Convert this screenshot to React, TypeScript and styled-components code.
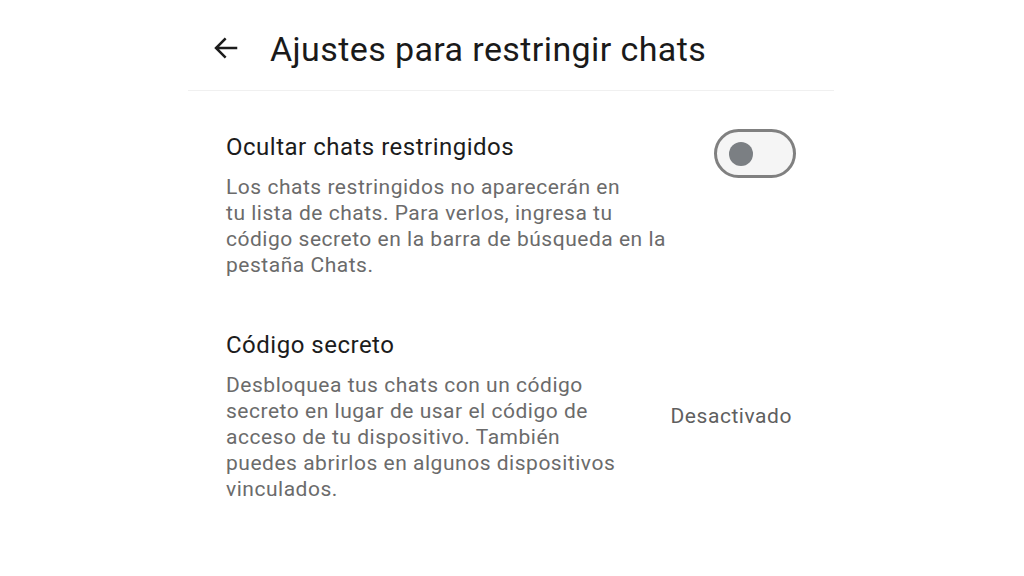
import styled, { createGlobalStyle } from "styled-components";

const GlobalStyle = createGlobalStyle`
  body {
    margin: 0;
    background: #ffffff;
    font-family: Roboto, "Noto Sans", sans-serif;
    -webkit-font-smoothing: antialiased;
  }
`;

const Screen = styled.div`
  width: 1024px;
  height: 576px;
  display: flex;
  justify-content: center;
  background: #ffffff;
  overflow: hidden;
`;

const Panel = styled.div`
  width: 646px;
  margin-left: -2px;
  display: flex;
  flex-direction: column;
`;

const Header = styled.header`
  height: 91px;
  display: flex;
  align-items: center;
  gap: 29px;
  padding: 8px 0 0 23px;
  box-sizing: border-box;
  border-bottom: 1.5px solid #f0f0f0;
`;

const BackButton = styled.button`
  border: 0;
  background: none;
  padding: 0;
  width: 30px;
  height: 30px;
  display: flex;
  align-items: center;
  justify-content: center;
  color: #1c1c1c;
  cursor: pointer;
  margin-top: -3px;
`;

const Title = styled.h1`
  margin: 0;
  font-size: 34px;
  font-weight: 400;
  color: #1a1a1a;
  letter-spacing: 0.4px;
`;

const Section = styled.section<{ $top: number }>`
  display: flex;
  align-items: center;
  justify-content: space-between;
  padding: ${(p) => p.$top}px 38px 0 38px;
`;

const TextBlock = styled.div`
  display: flex;
  flex-direction: column;
  gap: 12px;
`;

const ItemTitle = styled.div`
  font-size: 24px;
  line-height: 30px;
  letter-spacing: 0.5px;
  color: #1c1c1c;
`;

const ItemText = styled.p`
  margin: 0;
  font-size: 21px;
  line-height: 26px;
  letter-spacing: 0.52px;
  color: #6b6b6b;
`;

const SideValue = styled.span`
  font-size: 21px;
  letter-spacing: 0.55px;
  color: #5f5f5f;
  margin-right: 4px;
`;

const Switch = styled.button<{ $on: boolean }>`
  width: 82px;
  height: 49px;
  box-sizing: border-box;
  border: 3px solid #808080;
  border-radius: 25px;
  background: #f5f5f5;
  padding: 0 0 0 12px;
  display: flex;
  align-items: center;
  justify-content: ${(p) => (p.$on ? "flex-end" : "flex-start")};
  align-self: flex-start;
  margin-top: -3px;
  cursor: pointer;

  &::after {
    content: "";
    width: 24px;
    height: 24px;
    border-radius: 50%;
    background: #7b7f83;
  }
`;

function BackArrow() {
  return (
    <svg width="30" height="30" viewBox="0 0 24 24" fill="none">
      <path
        d="M20 12H4.5M11 5l-7 7 7 7"
        stroke="currentColor"
        strokeWidth="2"
        strokeLinecap="square"
      />
    </svg>
  );
}

export default function App() {
  return (
    <>
      <GlobalStyle />
      <Screen>
        <Panel>
          <Header>
            <BackButton aria-label="Atrás">
              <BackArrow />
            </BackButton>
            <Title>Ajustes para restringir chats</Title>
          </Header>

          <Section $top={41}>
            <TextBlock>
              <ItemTitle>Ocultar chats restringidos</ItemTitle>
              <ItemText>
                Los chats restringidos no aparecerán en
                <br />
                tu lista de chats. Para verlos, ingresa tu
                <br />
                código secreto en la barra de búsqueda en la
                <br />
                pestaña Chats.
              </ItemText>
            </TextBlock>
            <Switch $on={false} aria-label="Ocultar chats restringidos" />
          </Section>

          <Section $top={52}>
            <TextBlock>
              <ItemTitle>Código secreto</ItemTitle>
              <ItemText>
                Desbloquea tus chats con un código
                <br />
                secreto en lugar de usar el código de
                <br />
                acceso de tu dispositivo. También
                <br />
                puedes abrirlos en algunos dispositivos
                <br />
                vinculados.
              </ItemText>
            </TextBlock>
            <SideValue>Desactivado</SideValue>
          </Section>
        </Panel>
      </Screen>
    </>
  );
}
